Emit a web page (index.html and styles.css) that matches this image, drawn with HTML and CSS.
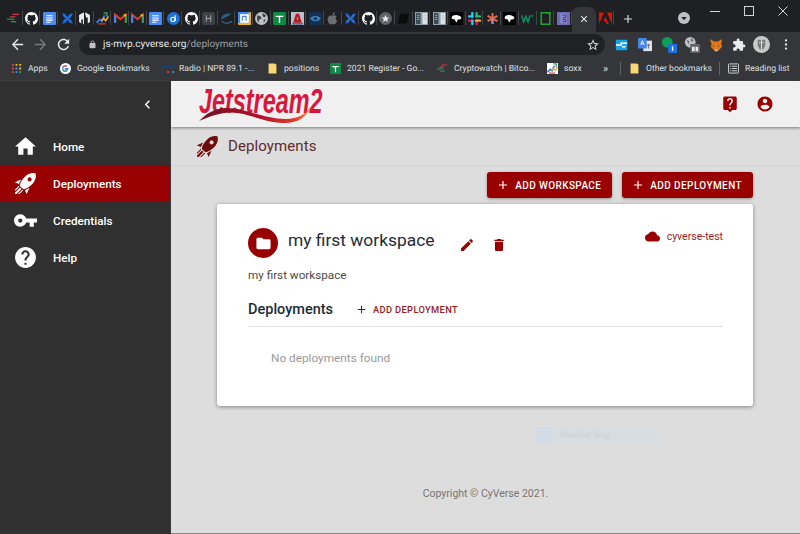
FILE: index.html
```html
<!DOCTYPE html>
<html lang="en">
<head>
<meta charset="utf-8">
<title>Deployments</title>
<link rel="stylesheet" href="styles.css">
</head>
<body>
<svg class="defs" width="0" height="0" aria-hidden="true">
  <symbol id="gh" viewBox="0 0 16 16"><path d="M8 0C3.58 0 0 3.58 0 8c0 3.54 2.29 6.53 5.47 7.59.4.07.55-.17.55-.38 0-.19-.01-.82-.01-1.49-2.01.37-2.53-.49-2.69-.94-.09-.23-.48-.94-.82-1.13-.28-.15-.68-.52-.01-.53.63-.01 1.08.58 1.23.82.72 1.21 1.87.87 2.33.66.07-.52.28-.87.51-1.07-1.78-.2-3.64-.89-3.64-3.95 0-.87.31-1.59.82-2.15-.08-.2-.36-1.02.08-2.12 0 0 .67-.21 2.2.82.64-.18 1.32-.27 2-.27.68 0 1.36.09 2 .27 1.53-1.04 2.2-.82 2.2-.82.44 1.1.16 1.92.08 2.12.51.56.82 1.27.82 2.15 0 3.07-1.87 3.75-3.65 3.95.29.25.54.73.54 1.48 0 1.07-.01 1.93-.01 2.2 0 .21.15.46.55.38A8.013 8.013 0 0016 8c0-4.42-3.58-8-8-8z" fill="#fff"/></symbol>
  <symbol id="doc" viewBox="0 0 12 12"><rect width="12" height="12" rx="1" fill="#4a8af4"/><path d="M3 3.5h6M3 5.5h6M3 7.5h6M3 9.500h4" stroke="#fff" stroke-width="1"/></symbol>
  <symbol id="x" viewBox="0 0 12 12"><path d="M1 1.500C4 1 5 3 6 5c1-2 2-4 5-3.500L9 5 7.500 6 9 7l2 3.500c-3 .5-4-1.500-5-3.500-1 2-2 4-5 3.500L3 7l1.500-1L3 5z" fill="#1d6fe0"/></symbol>
  <symbol id="gm" viewBox="0 0 12 12"><path d="M1 10V2.500l5 4 5-4V10" fill="none" stroke="#d93b2b" stroke-width="2"/><path d="M1 10V3" stroke="#3f86f4" stroke-width="2"/><path d="M11 10V3" stroke="#30a050" stroke-width="2"/><path d="M9 3.500l2-1" stroke="#f4b400" stroke-width="2"/></symbol>
  <symbol id="sheet" viewBox="0 0 12 12"><rect width="12" height="12" rx="1" fill="#0e8a43"/><path d="M2.500 4h7M6 4v6" stroke="#fff" stroke-width="1.300"/></symbol>
  <symbol id="book" viewBox="0 0 12 12"><rect width="12" height="12" fill="#8fa0aa"/><rect x="1" y="1" width="4" height="10" fill="#37474f"/><rect x="7" y="1" width="4" height="10" fill="#dfe5e8"/><path d="M2 3h2M2 5h2M2 7h2M8 3h2M8 5h2M8 7h2" stroke="#b0bec5" stroke-width=".8"/></symbol>
  <symbol id="blob" viewBox="0 0 12 12"><rect width="12" height="12" fill="#000"/><path d="M1.500 5C2 3 5 2.500 7 3c2 .3 3.500 1.500 3.500 2.500S8.500 7 7.500 7 7 9 6 9.500 5 7 4 6.800 1.300 6.500 1.500 5z" fill="#fff"/></symbol>
  <symbol id="sfolder" viewBox="0 0 12 14"><path d="M1 .5h7.500L11 2v11.500H1z" fill="#f8d775"/></symbol>
  <symbol id="crypto" viewBox="0 0 14 12"><path d="M6 1.500h7" stroke="#d23c3c" stroke-width="1.400"/><path d="M3 4.200h6" stroke="#c9403f" stroke-width="1.400"/><path d="M0 6.800h8" stroke="#2d8a57" stroke-width="1.400"/><path d="M4 9.500h6" stroke="#1f9d55" stroke-width="1.400"/></symbol>
  <symbol id="chart" viewBox="0 0 12 12"><path d="M.5 10l3-3 2 1.500L8 3" fill="none" stroke="#3b78e7" stroke-width="1.800"/><path d="M5 8l2-2 2 2 2.500-4" fill="none" stroke="#e8a33d" stroke-width="1.600"/><path d="M7 1h3v3" fill="none" stroke="#2f9e56" stroke-width="1.400"/><path d="M2 11h7" stroke="#d93b2b" stroke-width="1.200"/></symbol>
  <symbol id="add" viewBox="0 0 24 24"><path d="M19 13h-6v6h-2v-6H5v-2h6V5h2v6h6v2z"/></symbol>
  <symbol id="rocket" viewBox="0 0 24 24"><path d="M13.130 22.190L11.500 18.360C13.070 17.780 14.540 17 15.900 16.090L13.130 22.190M5.640 12.500L1.810 10.870L7.910 8.100C7 9.460 6.220 10.930 5.640 12.500M21.610 2.390C21.610 2.390 16.660 .269 11 5.930C8.810 8.120 7.500 10.530 6.650 12.640C6.370 13.390 6.560 14.210 7.110 14.770L9.240 16.890C9.790 17.450 10.610 17.630 11.360 17.350C13.500 16.530 15.880 15.190 18.070 13C23.730 7.340 21.610 2.390 21.610 2.390M14.540 9.460C13.760 8.680 13.760 7.410 14.540 6.630S16.590 5.850 17.370 6.630C18.140 7.410 18.150 8.680 17.370 9.460C16.590 10.240 15.320 10.240 14.540 9.460M6.240 22L9.880 18.360C9.540 18.270 9.210 18.120 8.910 17.910L4.830 22H6.240M2 22H3.410L8.180 17.240L6.760 15.830L2 20.590V22M2 19.170L6.090 15.090C5.880 14.790 5.730 14.470 5.640 14.120L2 17.760V19.170Z"/></symbol>
</svg>

<header class="chrome">
  <div class="tabstrip">
    <div class="favs">
      <span class="fav"><svg viewBox="0 0 14 12"><use href="#crypto"/></svg></span>
      <span class="fav"><svg viewBox="0 0 16 16"><use href="#gh"/></svg></span>
      <span class="fav"><svg viewBox="0 0 12 12"><use href="#doc"/></svg></span>
      <span class="fav"><svg viewBox="0 0 12 12"><use href="#x"/></svg></span>
      <span class="fav"><svg viewBox="0 0 12 12"><path d="M5 .5L1 2.800v6.400L3 10.500V7h1.500v4.500L5.500 11V1zM7 .5l4 2.300v6.400L9 10.500V5H7.500L6.500 1z" fill="#eee"/></svg></span>
      <span class="fav"><svg viewBox="0 0 12 12"><use href="#chart"/></svg></span>
      <span class="fav"><svg viewBox="0 0 12 12"><use href="#gm"/></svg></span>
      <span class="fav"><svg viewBox="0 0 12 12"><use href="#gm"/></svg></span>
      <span class="fav"><svg viewBox="0 0 12 12"><use href="#doc"/></svg></span>
      <span class="fav"><svg viewBox="0 0 12 12"><circle cx="6" cy="6" r="6" fill="#1e6fd9"/><circle cx="5.500" cy="6.800" r="2" fill="none" stroke="#fff"/><path d="M7.500 3v5.500" stroke="#fff"/></svg></span>
      <span class="fav"><svg viewBox="0 0 16 16"><use href="#gh"/></svg></span>
      <span class="fav"><svg viewBox="0 0 12 12"><rect width="12" height="12" rx="2" fill="#3b4145"/><path d="M4 3v6M8 3v6M4 6h4" stroke="#9aa0a6"/></svg></span>
      <span class="fav"><svg viewBox="0 0 12 12"><path d="M10.500 1.500C5 .5.500 3 1 7c3-1.500 6-2.500 9.500-5.500z" fill="#2c5d80"/><path d="M1.500 8.500C4 11 9 11 11 8.500" fill="none" stroke="#3d6f92"/></svg></span>
      <span class="fav"><svg viewBox="0 0 12 12"><rect width="12" height="12" rx="1" fill="#f4b400"/><rect width="10" height="10" fill="#4285f4"/><rect x="2" y="2" width="8" height="8" fill="#fff"/><path d="M4 4v4M7.500 4v4M4 4h3.500" stroke="#3b78e7" fill="none"/></svg></span>
      <span class="fav"><svg viewBox="0 0 12 12"><circle cx="6" cy="6" r="6" fill="#bdc1c6"/><path d="M2 3l3 1 1 2-2 1-1 3-1-3zM7 1l3 2-1 2-2-1zM8 7l2 0-2 3z" fill="#3c4043"/></svg></span>
      <span class="fav"><svg viewBox="0 0 12 12"><use href="#sheet"/></svg></span>
      <span class="fav"><svg viewBox="0 0 12 12"><rect width="12" height="12" fill="#b8c0cc"/><path d="M4.500 1.500h3l2.500 8.500H2zM5.300 7h1.400L6 4.200z" fill="#b71c2d"/><path d="M1 11h10" stroke="#1f3a68"/></svg></span>
      <span class="fav"><svg viewBox="0 0 12 12"><rect width="12" height="12" rx="1" fill="#14304f"/><path d="M1 6c3-3.500 7-3.500 10 0-3 3.500-7 3.500-10 0z" fill="#3b80b8"/><circle cx="6" cy="6" r="1.500" fill="#14304f"/></svg></span>
      <span class="fav"><svg viewBox="0 0 12 12"><path d="M6 3.500C7 3 8.500 2.700 9.800 4 8.500 5 8.700 7.300 10.300 8c-.7 1.800-1.800 3.500-3 3.500-.6 0-.9-.4-1.500-.4s-1 .4-1.600.4C3 11.500 1.500 9 1.500 6.800c0-2.400 2.200-4 4.500-3.300zM6 3c0-1.500 1-2.500 2.300-2.700C8.400 1.800 7.400 3 6 3z" fill="#6b6e72"/></svg></span>
      <span class="fav"><svg viewBox="0 0 12 12"><use href="#x"/></svg></span>
      <span class="fav"><svg viewBox="0 0 16 16"><use href="#gh"/></svg></span>
      <span class="fav"><svg viewBox="0 0 12 12"><circle cx="6" cy="6" r="6" fill="#5f6368"/><path d="M6 2.500l1 2.500h2.600l-2 1.700.7 2.600L6 7.800 3.700 9.300l.7-2.600-2-1.700H5z" fill="#e8eaed"/></svg></span>
      <span class="fav"><svg viewBox="0 0 12 12"><path d="M3 1.500h8L9 10.500H1z" fill="#0b0b0b"/></svg></span>
      <span class="fav"><svg viewBox="0 0 12 12"><use href="#book"/></svg></span>
      <span class="fav"><svg viewBox="0 0 12 12"><use href="#book"/></svg></span>
      <span class="fav"><svg viewBox="0 0 12 12"><use href="#blob"/></svg></span>
      <span class="fav"><svg viewBox="0 0 12 12"><path d="M4 1v3.500" stroke="#36c5f0" stroke-width="2.200" stroke-linecap="round"/><path d="M8 7.500V11" stroke="#e01e5a" stroke-width="2.200" stroke-linecap="round"/><path d="M1 8h3.500" stroke="#e01e5a" stroke-width="2.200" stroke-linecap="round"/><path d="M7.500 4H11" stroke="#2eb67d" stroke-width="2.200" stroke-linecap="round"/><path d="M8 1v1.500" stroke="#2eb67d" stroke-width="2.200" stroke-linecap="round"/><path d="M1 4h1.500M4 8v3" stroke="#36c5f0" stroke-width="2.200" stroke-linecap="round"/><path d="M7.500 8H11" stroke="#ecb22e" stroke-width="2.200" stroke-linecap="round"/></svg></span>
      <span class="fav"><svg viewBox="0 0 12 12"><path d="M6 1v10M1.500 3.500l9 5M10.500 3.500l-9 5" stroke="#e9693f" stroke-width="1.800"/><path d="M6 6v5" stroke="#a78bc9" stroke-width="1.800"/></svg></span>
      <span class="fav"><svg viewBox="0 0 12 12"><use href="#blob"/></svg></span>
      <span class="fav"><svg viewBox="0 0 12 12"><path d="M.5 3l2 6 2-5 2 5 2-6" fill="none" stroke="#0f8f5f" stroke-width="1.500"/><path d="M10.500 2.500v2" stroke="#0f8f5f" stroke-width="1.300"/></svg></span>
      <span class="fav"><svg viewBox="0 0 12 12"><rect x="2" y=".7" width="8" height="10.600" fill="none" stroke="#1fa32c" stroke-width="1.400"/><path d="M7 .7h3v2" fill="none" stroke="#1fa32c" stroke-width="1.400"/></svg></span>
      <span class="fav"><svg viewBox="0 0 12 12"><rect width="12" height="12" fill="#6f6db8"/><rect x="3" y="1.500" width="6" height="9" fill="#8a88c8"/><path d="M5 3h3v2H6v2h2v2H5" fill="none" stroke="#4b4990"/></svg></span>
    </div>
    <div class="tab-active"><svg class="tab-x" viewBox="0 0 10 10"><path d="M1.500 1.500l7 7M8.500 1.500l-7 7" stroke="#e8eaed" stroke-width="1.300"/></svg></div>
    <span class="fav fav-last"><svg viewBox="0 0 12 12"><path d="M0 .5h4.500L0 11zM7.500 .5H12V11zM6 4.500L9 11H7L6 8.500H4z" fill="#e01400"/></svg></span>
    <svg class="newtab" viewBox="0 0 24 24"><path d="M19 13h-6v6h-2v-6H5v-2h6V5h2v6h6v2z" fill="#dadce0"/></svg>
    <span class="tabsearch"><svg viewBox="0 0 12 12"><circle cx="6" cy="6" r="6" fill="#bdc1c6"/><path d="M3.300 5h5.400L6 8.200z" fill="#202124"/></svg></span>
    <div class="winctl">
      <svg viewBox="0 0 10 10"><path d="M0 5.500h10" stroke="#d5d5d5"/></svg>
      <svg viewBox="0 0 10 10"><rect x=".5" y=".5" width="9" height="9" fill="none" stroke="#d5d5d5"/></svg>
      <svg viewBox="0 0 10 10"><path d="M.5.5l9 9M9.500.5l-9 9" stroke="#d5d5d5"/></svg>
    </div>
  </div>

  <div class="toolbar">
    <svg class="nav-btn" viewBox="0 0 24 24"><path d="M20 11H7.830l5.590-5.590L12 4l-8 8 8 8 1.410-1.410L7.830 13H20v-2z" fill="#e8eaed"/></svg>
    <svg class="nav-btn" viewBox="0 0 24 24"><path d="M12 4l-1.410 1.410L16.170 11H4v2h12.170l-5.580 5.590L12 20l8-8z" fill="#77797c"/></svg>
    <svg class="nav-btn" viewBox="0 0 24 24"><path d="M17.650 6.350C16.200 4.900 14.210 4 12 4c-4.420 0-7.990 3.580-7.990 8s3.570 8 7.990 8c3.730 0 6.840-2.550 7.730-6h-2.080c-.82 2.330-3.040 4-5.650 4-3.310 0-6-2.690-6-6s2.690-6 6-6c1.660 0 3.140.69 4.220 1.780L13 11h7V4l-2.350 2.350z" fill="#e8eaed"/></svg>
    <div class="omnibox">
      <svg class="lock" viewBox="0 0 24 24"><path d="M18 8h-1V6c0-2.760-2.240-5-5-5S7 3.240 7 6v2H6c-1.100 0-2 .9-2 2v10c0 1.100.9 2 2 2h12c1.100 0 2-.9 2-2V10c0-1.100-.9-2-2-2zM9 6c0-1.660 1.340-3 3-3s3 1.340 3 3v2H9V6z" fill="#bdc1c6"/></svg>
      <span class="url"><span class="host">js-mvp.cyverse.org</span>/deployments</span>
      <svg class="star" viewBox="0 0 24 24"><path d="M22 9.240l-7.190-.62L12 2 9.190 8.630 2 9.240l5.460 4.730L5.820 21 12 17.270 18.180 21l-1.630-7.030L22 9.240zM12 15.400l-3.760 2.270 1-4.280-3.320-2.880 4.380-.38L12 6.100l1.710 4.040 4.380.38-3.320 2.880 1 4.280L12 15.400z" fill="#dadce0"/></svg>
    </div>
    <div class="exts">
      <svg viewBox="0 0 16 16"><rect x="1" y="2" width="13" height="12" fill="#19a0e6"/><path d="M1 8h6V6h7M8 10h4" stroke="#fff" stroke-width="1.500" fill="none"/></svg>
      <svg viewBox="0 0 16 16"><rect x="6" y="3" width="10" height="12" fill="#dfe1e5"/><rect x="0" y="0" width="10" height="12" rx="1" fill="#4285f4"/><path d="M3 8l2-5 2 5M4 6.500h2" stroke="#fff" fill="none"/><path d="M10 8h4M12 7v5" stroke="#5f6368"/></svg>
      <svg class="ext-badge" viewBox="0 0 18 18"><circle cx="7" cy="6" r="6" fill="#0f9d58"/><rect x="8" y="8" width="10" height="10" rx="1" fill="#1a73e8"/><path d="M13 10.500v5" stroke="#fff" stroke-width="1.500"/></svg>
      <svg class="ext-badge2" viewBox="0 0 18 18"><circle cx="7" cy="6" r="6" fill="#bdc1c6"/><path d="M3 3l3 2-1 3zM8 1l3 3-3 1z" fill="#5f6368"/><rect x="7" y="8" width="11" height="10" rx="1" fill="#5f6368"/><rect x="9" y="11" width="7" height="5" fill="#e8eaed"/><path d="M12.500 11v5" stroke="#5f6368"/></svg>
      <svg viewBox="0 0 16 16"><path d="M1 1l5 3h4l5-3-1 6 1 3-3 3-2 2H7l-2-2-3-3 1-3z" fill="#e2761b"/><path d="M4 8l2 1-1 1zM12 8l-2 1 1 1z" fill="#233447"/><path d="M6 13h4l-1 2H7z" fill="#d7c1b3"/></svg>
      <svg viewBox="0 0 24 24"><path d="M20.500 11H19V7c0-1.100-.9-2-2-2h-4V3.500C13 2.120 11.880 1 10.500 1S8 2.120 8 3.500V5H4c-1.100 0-1.990.9-1.990 2v3.800H3.500c1.490 0 2.700 1.210 2.700 2.700s-1.210 2.700-2.700 2.700H2V20c0 1.100.9 2 2 2h3.800v-1.500c0-1.490 1.210-2.700 2.700-2.700 1.490 0 2.700 1.210 2.700 2.700V22H17c1.100 0 2-.9 2-2v-4h1.500c1.380 0 2.500-1.120 2.500-2.500S21.880 11 20.500 11z" fill="#e8eaed"/></svg>
      <svg class="ext-avatar" viewBox="0 0 18 18"><circle cx="9" cy="9" r="9" fill="#c9c9c9"/><path d="M5 4h8v6l-2 4H7L5 10z" fill="#7a7a7a"/><path d="M6.500 7h1.500M10 7h1.500M9 3v11" stroke="#e6e6e6"/></svg>
      <svg class="ext-more" viewBox="0 0 4 16"><circle cx="2" cy="3" r="1.400" fill="#e8eaed"/><circle cx="2" cy="8" r="1.400" fill="#e8eaed"/><circle cx="2" cy="13" r="1.400" fill="#e8eaed"/></svg>
    </div>
  </div>

  <nav class="bookmarks">
    <a class="bm bm-apps"><svg class="bm-ic" viewBox="0 0 12 12"><path d="M1 1h2v2H1zM1 5h2v2H1zM1 9h2v2H1z" fill="#ea4335"/><path d="M5 1h2v2H5z" fill="#fbbc05"/><path d="M5 5h2v2H5zM5 9h2v2H5z" fill="#4285f4"/><path d="M9 1h2v2H9zM9 5h2v2H9z" fill="#fbbc05"/><path d="M9 9h2v2H9z" fill="#34a853"/></svg>Apps</a>
    <a class="bm bm-g"><svg class="bm-ic" viewBox="0 0 12 12"><circle cx="6" cy="6" r="6" fill="#fff"/><path d="M9.500 6H6v1.300h2.100A2.200 2.200 0 016 9a3 3 0 010-6l1.500.6" fill="none" stroke="#4285f4" stroke-width="1.300"/><path d="M3.300 4.500A3 3 0 016 3c.7 0 1.200.2 1.700.6" fill="none" stroke="#ea4335" stroke-width="1.300"/><path d="M3.100 7.300A3 3 0 006 9c.6 0 1.100-.2 1.500-.4" fill="none" stroke="#34a853" stroke-width="1.300"/></svg>Google Bookmarks</a>
    <a class="bm bm-radio"><svg class="bm-ic-w" viewBox="0 0 14 10"><path d="M0 3h14" stroke="#1c3f70" stroke-width="2"/><path d="M1 8h2" stroke="#1c3f70" stroke-width="2"/><path d="M6 8h2" stroke="#d9412c" stroke-width="2"/><path d="M11 8h2" stroke="#3c7bd1" stroke-width="2"/></svg>Radio | NPR 89.1 -...</a>
    <a class="bm bm-pos"><svg class="bm-ic" viewBox="0 0 12 14"><use href="#sfolder"/></svg>positions</a>
    <a class="bm bm-reg"><svg class="bm-ic" viewBox="0 0 12 12"><use href="#sheet"/></svg>2021 Register - Go...</a>
    <a class="bm bm-cry"><svg class="bm-ic" viewBox="0 0 14 12"><use href="#crypto"/></svg>Cryptowatch | Bitco...</a>
    <a class="bm bm-sox"><svg class="bm-ic bm-white" viewBox="0 0 12 12"><use href="#chart"/></svg>soxx</a>
    <span class="bm-more">»</span>
    <span class="bm-sep"></span>
    <a class="bm bm-oth"><svg class="bm-ic" viewBox="0 0 12 14"><use href="#sfolder"/></svg>Other bookmarks</a>
    <span class="bm-sep"></span>
    <a class="bm"><svg class="bm-ic" viewBox="0 0 12 12"><rect x=".5" y="1" width="11" height="10" rx="1" fill="none" stroke="#dadce0"/><path d="M2 3.500h1M4 3.500h6M2 6h1M4 6h6M2 8.500h1M4 8.500h6" stroke="#dadce0"/></svg>Reading list</a>
  </nav>
</header>

<div class="app">
  <aside class="sidebar">
    <div class="side-top"><svg class="chev" viewBox="0 0 24 24"><path d="M15.410 7.410L14 6l-6 6 6 6 1.410-1.410L10.830 12z" fill="#fff"/></svg></div>
    <a class="side-item"><span class="side-ic"><svg viewBox="0 0 24 24"><path d="M10 20v-6h4v6h5v-8h3L12 3 2 12h3v8z"/></svg></span>Home</a>
    <a class="side-item side-on"><span class="side-ic"><svg viewBox="0 0 24 24"><use href="#rocket"/></svg></span>Deployments</a>
    <a class="side-item"><span class="side-ic"><svg viewBox="0 0 24 24"><path d="M7 14C5.900 14 5 13.100 5 12S5.900 10 7 10 9 10.900 9 12 8.100 14 7 14M12.600 10C11.800 7.700 9.600 6 7 6C3.700 6 1 8.700 1 12S3.700 18 7 18C9.600 18 11.800 16.300 12.600 14H16V18H20V14H23V10H12.600Z"/></svg></span>Credentials</a>
    <a class="side-item"><span class="side-ic"><svg viewBox="0 0 24 24"><path d="M12 2C6.480 2 2 6.480 2 12s4.480 10 10 10 10-4.480 10-10S17.520 2 12 2zm1 17h-2v-2h2v2zm2.070-7.750l-.9.920C13.450 12.900 13 13.500 13 15h-2v-.5c0-1.100.45-2.100 1.170-2.830l1.240-1.260c.37-.36.59-.86.59-1.410 0-1.100-.9-2-2-2s-2 .9-2 2H8c0-2.210 1.790-4 4-4s4 1.790 4 4c0 .88-.36 1.680-.93 2.250z"/></svg></span>Help</a>
  </aside>

  <main class="main">
    <div class="appbar">
      <svg class="logo" viewBox="0 0 128 44" role="img" aria-label="Jetstream2">
        <defs><linearGradient id="sw" x1="0" x2="1" y1="0" y2="0"><stop offset="0" stop-color="#6b0f1c"/><stop offset=".55" stop-color="#b3112c"/><stop offset=".85" stop-color="#e03a2a"/><stop offset="1" stop-color="#f0913a"/></linearGradient></defs>
        <text transform="scale(.65 1)" x="1.500" y="30" class="logo-text" textLength="190" lengthAdjust="spacingAndGlyphs">Jetstream2</text>
        <path d="M1 38C9 30 18 25 28 25C48 25 64 36 88 36C100 36 108 31 113 23C109 34 100 40.500 85 40C65 39.500 50 29.500 33 29.500C22 29.500 10 34 1 38Z" fill="url(#sw)"/>
      </svg>
      <div class="appbar-icons">
        <svg viewBox="0 0 24 24"><path d="M19 2H5c-1.110 0-2 .9-2 2v14c0 1.100.89 2 2 2h4l3 3 3-3h4c1.100 0 2-.9 2-2V4c0-1.100-.9-2-2-2zm-6 16h-2v-2h2v2zm2.070-7.750l-.9.920C13.450 11.900 13 12.500 13 14h-2v-.5c0-1.100.45-2.100 1.170-2.830l1.240-1.260c.37-.36.59-.86.59-1.410 0-1.100-.9-2-2-2s-2 .9-2 2H8c0-2.210 1.790-4 4-4s4 1.790 4 4c0 .88-.36 1.680-.93 2.250z"/></svg>
        <svg viewBox="0 0 24 24"><path d="M12 2C6.480 2 2 6.480 2 12s4.480 10 10 10 10-4.480 10-10S17.520 2 12 2zm0 3c1.660 0 3 1.340 3 3s-1.340 3-3 3-3-1.340-3-3 1.340-3 3-3zm0 14.200c-2.500 0-4.710-1.280-6-3.220.03-1.990 4-3.080 6-3.080 1.990 0 5.970 1.090 6 3.080-1.290 1.940-3.500 3.220-6 3.220z"/></svg>
      </div>
    </div>
    <div class="pagehead">
      <svg viewBox="0 0 24 24"><use href="#rocket"/></svg>
      <h1>Deployments</h1>
    </div>
    <div class="actions">
      <button class="btn"><svg viewBox="0 0 24 24"><use href="#add"/></svg>ADD WORKSPACE</button>
      <button class="btn"><svg viewBox="0 0 24 24"><use href="#add"/></svg>ADD DEPLOYMENT</button>
    </div>
    <section class="card">
      <div class="ws-head">
        <span class="avatar"><svg viewBox="0 0 24 24"><path d="M10 4H4c-1.100 0-1.990.9-1.990 2L2 18c0 1.100.9 2 2 2h16c1.100 0 2-.9 2-2V8c0-1.100-.9-2-2-2h-8l-2-2z"/></svg></span>
        <h2>my first workspace</h2>
        <svg class="ws-edit" viewBox="0 0 24 24"><path d="M3 17.250V21h3.750L17.810 9.940l-3.750-3.750L3 17.250zM20.710 7.040c.39-.39.39-1.020 0-1.410l-2.340-2.340c-.39-.39-1.020-.39-1.410 0l-1.830 1.830 3.750 3.750 1.830-1.830z"/></svg>
        <svg class="ws-del" viewBox="0 0 24 24"><path d="M6 19c0 1.100.9 2 2 2h8c1.100 0 2-.9 2-2V7H6v12zM19 4h-3.500l-1-1h-5l-1 1H5v2h14V4z"/></svg>
        <div class="ws-cloud"><svg viewBox="0 0 24 24"><path d="M19.350 10.040C18.670 6.590 15.640 4 12 4 9.110 4 6.600 5.640 5.350 8.040 2.340 8.360 0 10.910 0 14c0 3.310 2.690 6 6 6h13c2.760 0 5-2.240 5-5 0-2.640-2.050-4.780-4.650-4.960z"/></svg>cyverse-test</div>
      </div>
      <p class="ws-desc">my first workspace</p>
      <div class="dep-head">
        <h3>Deployments</h3>
        <button class="btn-text"><svg viewBox="0 0 24 24"><use href="#add"/></svg>ADD DEPLOYMENT</button>
      </div>
      <p class="empty">No deployments found</p>
    </section>
    <footer class="foot">Copyright © CyVerse 2021.</footer>
    <div class="snip"><span class="snip-ic"></span>Window Snip</div>
  </main>
</div>
</body>
</html>
```

FILE: styles.css
```css
* { box-sizing: border-box; }
html, body { margin: 0; padding: 0; height: 534px; overflow: hidden; }
body { font-family: Roboto, "Liberation Sans", sans-serif; background: #dddddd; }
.defs { position: absolute; }
svg { display: block; flex: none; }
h1, h2, h3, p { margin: 0; font-weight: 400; }
button { font-family: inherit; border: 0; background: none; padding: 0; }

/* Browser chrome */
.chrome { height: 80px; background: #35363a; }
.tabstrip { height: 32px; background: #1f2023; display: flex; padding-left: 5px; position: relative; }
.favs { display: flex; padding-top: 11px; }
.fav { width: 17.73px; height: 14px; display: flex; align-items: center; justify-content: center; border-right: 1px solid #44454a; padding-left: 1px; }
.fav svg { width: 13px; height: 13px; }
.fav-last { margin-top: 11px; width: 18px; }
.tab-active { width: 24px; height: 25px; margin-top: 7px; background: #35363a; border-radius: 7px 7px 0 0; display: flex; align-items: center; justify-content: center; padding-bottom: 1px; }
.tab-x { width: 8px; height: 8px; }
.newtab { width: 14px; height: 14px; margin: 12px 0 0 7px; }
.tabsearch { margin: 12px 0 0 43px; }
.tabsearch svg { width: 12px; height: 12px; }
.winctl { margin-left: auto; display: flex; gap: 24px; padding: 6px 12px 0 0; }
.winctl svg { width: 10px; height: 10px; }

.toolbar { height: 25px; display: flex; align-items: center; padding-left: 9px; }
.nav-btn { width: 17px; height: 17px; margin-right: 6px; }
.omnibox { width: 526px; height: 21px; margin-left: 1px; border-radius: 11px; background: #202124; display: flex; align-items: center; padding: 0 4px 0 9px; font-size: 10px; text-rendering: geometricPrecision; color: #9aa0a6; }
.lock { width: 9px; height: 9px; margin-right: 6px; }
.url { white-space: nowrap; }
.host { color: #e8eaed; }
.star { width: 14px; height: 14px; margin-left: auto; margin-right: 1px; }
.exts { display: flex; align-items: center; }
.exts svg { width: 14px; height: 14px; margin-left: 9px; }
.exts svg:first-child { margin-left: 10px; }
.exts .ext-badge { width: 16px; height: 16px; margin-left: 9px; }
.exts .ext-badge2 { width: 16px; height: 16px; margin-left: 7px; }
.exts .ext-avatar { width: 17px; height: 17px; margin-left: 7px; }
.exts .ext-more { width: 4px; height: 13px; margin-left: 14px; }

.bookmarks { height: 23px; display: flex; align-items: center; padding-left: 11px; font-size: 8.600px; text-rendering: geometricPrecision; color: #dfe1e4; white-space: nowrap; }
.bm { display: flex; align-items: center; flex: none; }
.bm-ic { width: 11px; height: 11px; margin-right: 6px; }
.bm-ic-w { width: 14px; height: 10px; margin-right: 4px; }
.bm-white { background: #fff; }
.bm-apps { width: 49px; }
.bm-g { width: 101px; }
.bm-radio { width: 106px; }
.bm-pos { width: 63px; }
.bm-reg { width: 107px; }
.bm-cry { width: 110px; }
.bm-sox { width: 56px; }
.bm-more { width: 17px; font-size: 11px; }
.bm-sep { width: 1px; height: 13px; background: #5f6368; margin-right: 8px; }
.bm-oth { width: 90px; }

/* App */
.app { height: 454px; display: flex; border-top: 1px solid #3f3f3f; }
.sidebar { width: 171px; flex: none; background: #303030; color: #fff; font-size: 11.700px; font-weight: 500; border-right: 1px solid #3a3a3a; }
.side-top { height: 47px; display: flex; align-items: center; justify-content: flex-end; padding-right: 14px; padding-bottom: 1px; }
.chev { width: 17px; height: 17px; }
.side-item { height: 37px; display: flex; align-items: center; padding-left: 13px; }
.side-on { background: #990000; }
.side-ic { width: 40px; flex: none; }
.side-ic svg { width: 25px; height: 25px; fill: #fff; }

.main { flex: 1; min-width: 0; display: flex; flex-direction: column; position: relative; border-bottom: 1px solid #8a8a8a; }
.appbar { height: 46px; flex: none; background: #f0f0f0; box-shadow: 0 1px 3px rgba(0,0,0,.45); display: flex; align-items: flex-start; padding: 2px 26px 0 27px; position: relative; }
.logo { width: 128px; height: 44px; overflow: visible; }
.logo-text { font-family: "Liberation Sans", sans-serif; font-weight: 700; font-style: italic; font-size: 36px; fill: #d8173c; }
.appbar-icons { margin-left: auto; display: flex; gap: 17px; padding-top: 12px; }
.appbar-icons svg { width: 18px; height: 18px; fill: #990000; }
.pagehead { height: 39px; flex: none; display: flex; align-items: center; padding-left: 24px; border-bottom: 1px solid #d4d4d4; }
.pagehead svg { width: 25px; height: 25px; fill: #6e0c0c; margin-right: 8px; }
.pagehead h1 { font-size: 15px; color: #5f2a2e; letter-spacing: .1px; }
.actions { display: flex; justify-content: flex-end; gap: 10px; padding: 6px 47px 0 0; }
.btn { height: 26px; background: #990000; color: #fff; border-radius: 3px; font-size: 10px; font-weight: 500; letter-spacing: .4px; display: flex; align-items: center; padding: 0 11px 0 9px; box-shadow: 0 1px 3px rgba(0,0,0,.35); }
.btn svg { width: 14px; height: 14px; fill: #fff; margin-right: 5px; }
.card { margin: 6px 47px 0 46px; height: 202px; background: #fff; border-radius: 3px; box-shadow: 0 1px 4px rgba(0,0,0,.4); padding: 24px 30px 0 31px; }
.ws-head { display: flex; height: 30px; }
.avatar { width: 30px; height: 30px; border-radius: 50%; background: #990000; display: flex; align-items: center; justify-content: center; flex: none; }
.avatar svg { width: 17px; height: 17px; fill: #fff; }
.ws-head h2 { font-size: 17.400px; line-height: 24px; margin-left: 10px; color: #212c36; }
.ws-edit, .ws-del { width: 16px; height: 16px; fill: #990000; margin-top: 9px; }
.ws-edit { margin-left: 24px; }
.ws-del { margin-left: 16px; }
.ws-cloud { margin-left: auto; display: flex; align-items: center; height: 16px; font-size: 10.500px; color: #a01c24; }
.ws-cloud svg { width: 15px; height: 15px; fill: #990000; margin-right: 7px; }
.ws-desc { margin-top: 9px; font-size: 11.700px; line-height: 16px; color: #4a4a4a; }
.dep-head { margin-top: 15px; height: 29px; padding-bottom: 5px; display: flex; align-items: center; border-bottom: 1px solid #e0e0e0; }
.dep-head h3 { font-size: 14.500px; font-weight: 500; color: #212c36; }
.btn-text { display: flex; align-items: center; margin-left: 22px; font-size: 9.300px; font-weight: 500; letter-spacing: .35px; color: #9a1a22; }
.btn-text svg { width: 13px; height: 13px; fill: #990000; margin-right: 5px; }
.empty { margin-top: 22px; padding-left: 23px; font-size: 11.800px; line-height: 18px; color: #9a9a9a; }
.foot { margin-top: 81px; text-align: center; font-size: 10.500px; line-height: 14px; color: #757575; }
.snip { position: absolute; left: 365px; top: 346px; width: 125px; height: 16px; background: #d8dde2; font-size: 9px; color: #cdd1d6; display: flex; align-items: center; }
.snip-ic { width: 16px; height: 16px; background: #d3dce6; margin-right: 7px; }
```
